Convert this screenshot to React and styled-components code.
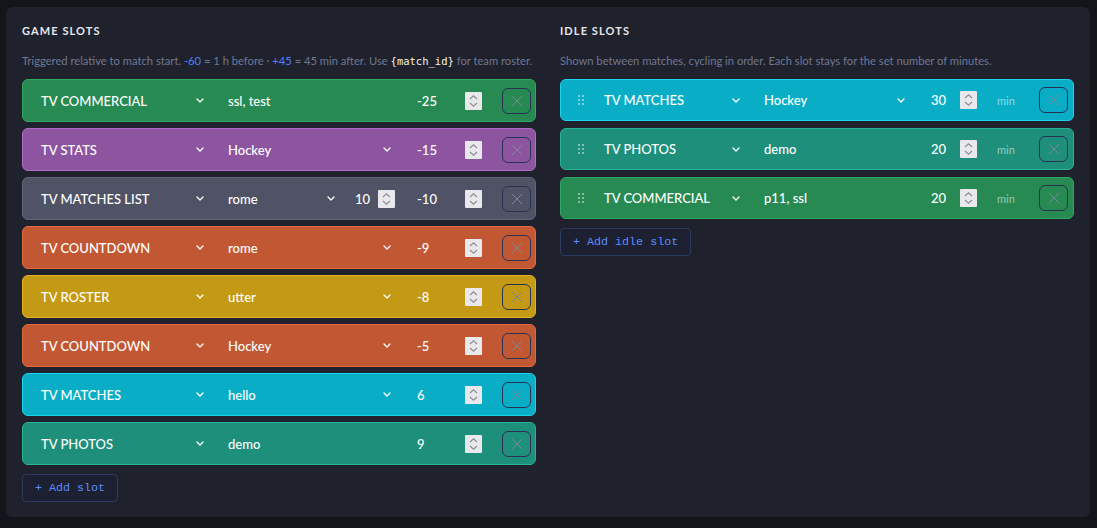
import styled, { createGlobalStyle } from 'styled-components'

const GlobalStyle = createGlobalStyle`
    html, body {
        margin: 0;
        background: #13151b;
    }
    body {
        padding: 7px 7px 11px 6px;
        font-family: Lato, "Noto Sans", sans-serif;
    }
`

const gameSlots = [
    { type: 'TV COMMERCIAL', param: 'ssl, test', input: true, offset: '-25', bg: '#268a52', border: '#2fa862' },
    { type: 'TV STATS', param: 'Hockey', offset: '-15', bg: '#8d55a0', border: '#b06cc8' },
    { type: 'TV MATCHES LIST', param: 'rome', count: '10', offset: '-10', bg: '#505366', border: '#62667a' },
    { type: 'TV COUNTDOWN', param: 'rome', offset: '-9', bg: '#c25833', border: '#e2693d' },
    { type: 'TV ROSTER', param: 'utter', offset: '-8', bg: '#c49913', border: '#e3b222' },
    { type: 'TV COUNTDOWN', param: 'Hockey', offset: '-5', bg: '#c25833', border: '#e2693d' },
    { type: 'TV MATCHES', param: 'hello', offset: '6', bg: '#09aec6', border: '#1bd3ec' },
    { type: 'TV PHOTOS', param: 'demo', input: true, offset: '9', bg: '#1d8f7a', border: '#27b396' },
]

const idleSlots = [
    { type: 'TV MATCHES', param: 'Hockey', minutes: '30', bg: '#09aec6', border: '#1bd3ec' },
    { type: 'TV PHOTOS', param: 'demo', input: true, minutes: '20', bg: '#1d8f7a', border: '#27b396' },
    { type: 'TV COMMERCIAL', param: 'p11, ssl', input: true, minutes: '20', bg: '#268a52', border: '#2fa862' },
]

function Chevron() {
    return (
        <svg width="8" height="5" viewBox="0 0 8 5" fill="none">
            <polyline points="1,1 4,4 7,1" stroke="#fff" strokeWidth="1.3" strokeLinecap="round" strokeLinejoin="round" />
        </svg>
    )
}

function Spinner() {
    return (
        <SpinBox>
            <svg width="17" height="18" viewBox="0 0 17 18" fill="none">
                <polyline points="5,7 8.5,3.8 12,7" stroke="#8b8b93" strokeWidth="1.1" />
                <polyline points="5,11 8.5,14.2 12,11" stroke="#8b8b93" strokeWidth="1.1" />
            </svg>
        </SpinBox>
    )
}

function Select({ value, input }) {
    return (
        <Field>
            <span>{value}</span>
            {!input && <Chevron />}
        </Field>
    )
}

function Number({ value }) {
    return (
        <NumField>
            <span>{value}</span>
            <Spinner />
        </NumField>
    )
}

function DeleteButton() {
    return (
        <Delete>
            <svg width="12" height="12" viewBox="0 0 12 12" fill="none">
                <path d="M1 1 L11 11 M11 1 L1 11" stroke="#7a8698" strokeWidth="1" />
            </svg>
        </Delete>
    )
}

function App() {
    return (
        <>
            <GlobalStyle />
            <Panel>
                <Column>
                    <Title>GAME SLOTS</Title>
                    <Desc>
                        Triggered relative to match start. <Hi>-60</Hi> = 1 h before · <Hi>+45</Hi> = 45 min after. Use <Code>{'{'}match_id{'}'}</Code> for team roster.
                    </Desc>
                    <List>
                        {gameSlots.map((s, i) => (
                            <GameRow key={i} $bg={s.bg} $border={s.border}>
                                <Select value={s.type} />
                                <Param>
                                    <Select value={s.param} input={s.input} />
                                    {s.count && <CountField><span>{s.count}</span><Spinner /></CountField>}
                                </Param>
                                <Number value={s.offset} />
                                <DeleteButton />
                            </GameRow>
                        ))}
                    </List>
                    <AddButton>+ Add slot</AddButton>
                </Column>
                <Column>
                    <Title>IDLE SLOTS</Title>
                    <Desc>Shown between matches, cycling in order. Each slot stays for the set number of minutes.</Desc>
                    <List $gap={7}>
                        {idleSlots.map((s, i) => (
                            <IdleRow key={i} $bg={s.bg} $border={s.border}>
                                <Handle>{[0, 1, 2, 3, 4, 5].map(d => <i key={d} />)}</Handle>
                                <Select value={s.type} />
                                <Select value={s.param} input={s.input} />
                                <Number value={s.minutes} />
                                <Unit>min</Unit>
                                <DeleteButton />
                            </IdleRow>
                        ))}
                    </List>
                    <AddButton>+ Add idle slot</AddButton>
                </Column>
            </Panel>
        </>
    )
}

const Panel = styled.div`
    background: #1f222d;
    border-radius: 7px;
    padding: 17px 16px 15px 16px;
    display: grid;
    grid-template-columns: 514px 514px;
    column-gap: 24px;
    align-items: start;
`

const Column = styled.div`
    display: flex;
    flex-direction: column;
    align-items: flex-start;
`

const Title = styled.h2`
    margin: 0;
    font-size: 11px;
    line-height: 14px;
    font-weight: 700;
    letter-spacing: 1.1px;
    color: #e6e7ee;
`

const Desc = styled.p`
    margin: 16px 0 11px;
    font-size: 11.2px;
    line-height: 14px;
    color: #6f7792;
    white-space: nowrap;
`

const Hi = styled.span`
    color: #4f7fff;
`

const Code = styled.code`
    font-family: "DejaVu Sans Mono", monospace;
    font-size: 10.5px;
    color: #f6f1e4;
`

const List = styled.div`
    display: flex;
    flex-direction: column;
    gap: ${p => p.$gap || 6}px;
    width: 100%;
`

const RowBase = styled.div`
    display: grid;
    align-items: center;
    background: ${p => p.$bg};
    border: 1px solid ${p => p.$border};
    border-radius: 6px;
    color: #fff;
    font-size: 13px;
    font-weight: 500;
    box-sizing: border-box;
`

const GameRow = styled(RowBase)`
    height: 43px;
    padding: 0 5px 0 18px;
    grid-template-columns: 167px 167px 67px 29px;
    column-gap: 20px;
`

const IdleRow = styled(RowBase)`
    height: 42px;
    padding: 0 7px 0 17px;
    grid-template-columns: 6px 140px 145px 48px 22px 29px;
    column-gap: 20px;
`

const Field = styled.div`
    display: flex;
    align-items: center;
    justify-content: space-between;
    padding-right: 4px;
    min-width: 0;
    white-space: nowrap;
`

const Param = styled.div`
    display: flex;
    align-items: center;
    gap: 16px;
    & > ${Field} {
        flex: 1;
    }
`

const NumField = styled.div`
    display: flex;
    align-items: center;
    justify-content: space-between;
    padding-left: 2px;
`

const CountField = styled(NumField)`
    width: 40px;
    padding-left: 0;
`

const SpinBox = styled.span`
    display: flex;
    width: 17px;
    height: 18px;
    background: #e9e9ed;
    border-radius: 1px;
`

const Delete = styled.button`
    width: 29px;
    height: 26px;
    padding: 0;
    display: flex;
    align-items: center;
    justify-content: center;
    background: transparent;
    border: 1.5px solid #2a3252;
    border-radius: 6px;
`

const Handle = styled.span`
    display: grid;
    grid-template-columns: 2px 2px;
    gap: 2px;
    i {
        width: 2px;
        height: 2px;
        background: rgba(255, 255, 255, 0.45);
    }
`

const Unit = styled.span`
    font-size: 11px;
    font-weight: 400;
    color: rgba(255, 255, 255, 0.55);
`

const AddButton = styled.button`
    margin-top: 9px;
    height: 28px;
    padding: 0 12px;
    background: #1c2030;
    border: 1px solid #2c3c60;
    border-radius: 4px;
    color: #5b8cff;
    font-family: "Liberation Mono", monospace;
    font-size: 11.7px;
`

export default App
